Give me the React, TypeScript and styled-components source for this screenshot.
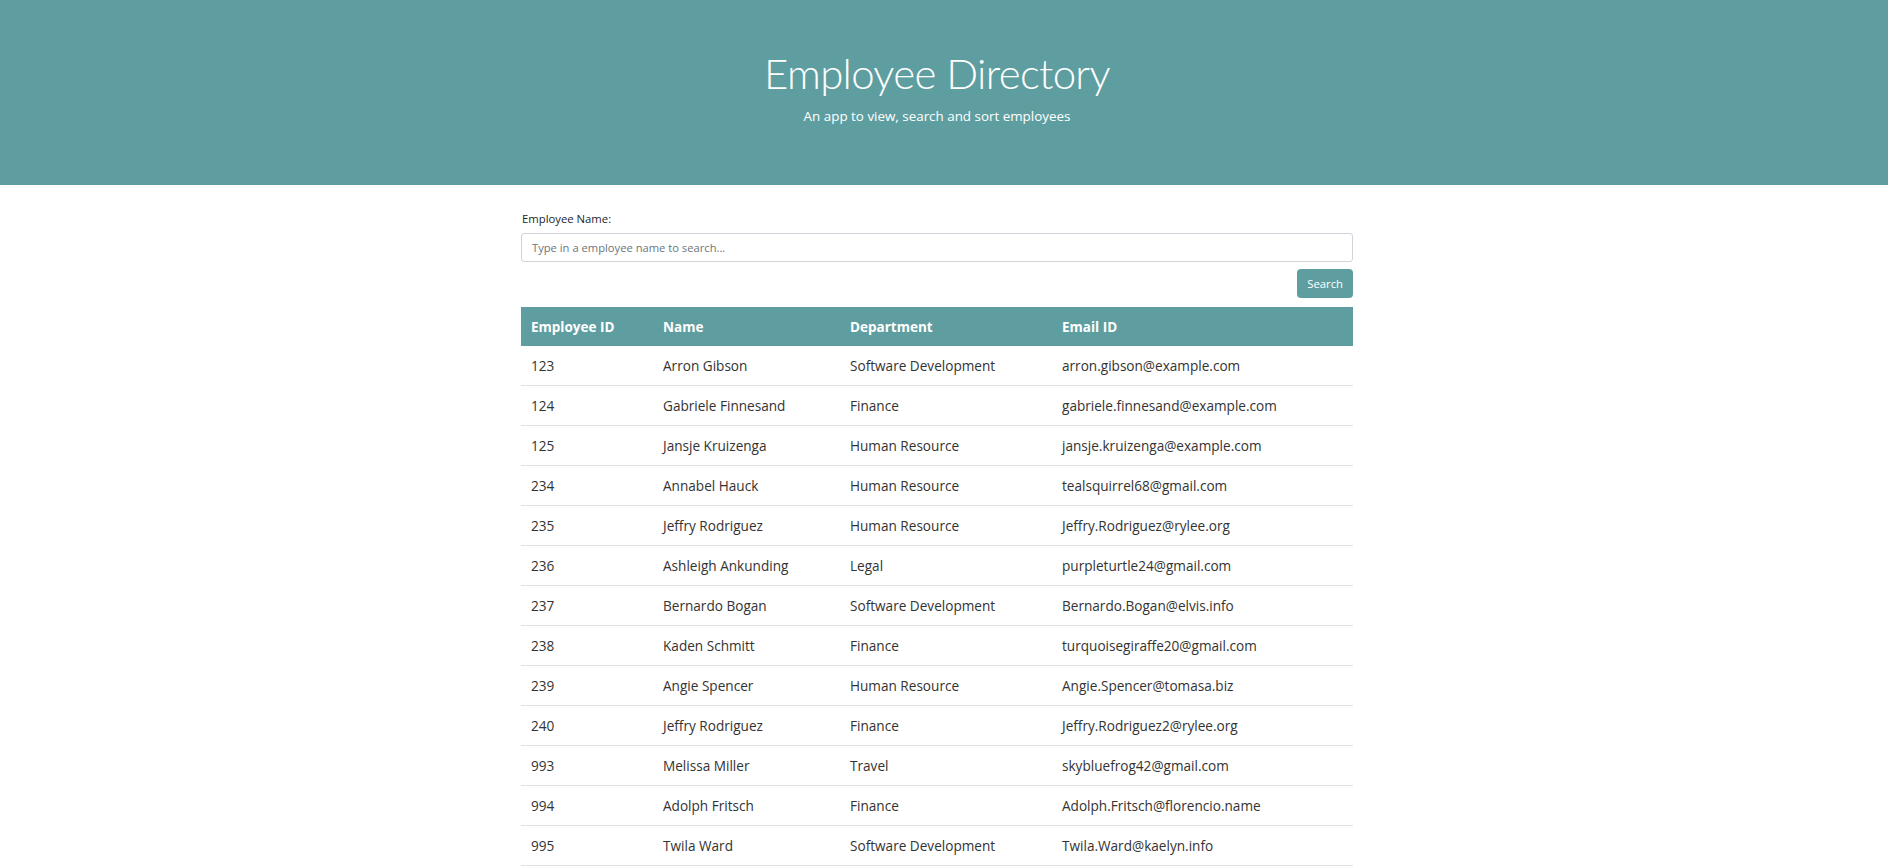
import React from "react";
import styled, { createGlobalStyle } from "styled-components";

const GlobalStyle = createGlobalStyle`
  html::-webkit-scrollbar {
    width: 4px;
    background: #f0f0f0;
  }
  html::-webkit-scrollbar-thumb {
    background: #c8c8c8;
  }
  body {
    margin: 0;
    font-family: "Open Sans", "Noto Sans", sans-serif;
    color: #212529;
    background: #fff;
  }
`

const teal = "#5f9ea0"

const Header = styled.header`
  height: 185px;
  background: ${teal};
  color: #fff;
  display: flex;
  flex-direction: column;
  align-items: center;
  padding: 47px 14px 0 0;
  box-sizing: border-box;
`

const Title = styled.h1`
  margin: 0;
  font-family: Lato, "Open Sans", sans-serif;
  font-weight: 300;
  font-size: 42px;
  letter-spacing: -0.7px;
  line-height: 52px;
`

const Subtitle = styled.p`
  margin: 7px 0 0;
  font-size: 13.4px;
  font-weight: 400;
  line-height: 20px;
`

const Main = styled.main`
  width: 832px;
  margin-left: calc(50% - 423px);
  padding-top: 27px;
`

const Label = styled.label`
  display: block;
  font-size: 11.3px;
  line-height: 14px;
  margin-bottom: 7px;
  padding-left: 1px;
`

const Input = styled.input`
  display: block;
  width: 100%;
  box-sizing: border-box;
  height: 29px;
  padding: 0 10px;
  border: 1px solid #ced4da;
  border-radius: 3px;
  font-family: inherit;
  font-size: 11.2px;
  color: #495057;

  &::placeholder {
    color: #6c757d;
  }
`

const Actions = styled.div`
  display: flex;
  justify-content: flex-end;
  padding: 7px 0 9px;
`

const Button = styled.button`
  height: 29px;
  padding: 0 10px;
  border: none;
  border-radius: 4px;
  background: ${teal};
  color: #fff;
  font-family: inherit;
  font-size: 11.3px;
  cursor: pointer;
`

const Table = styled.table`
  width: 100%;
  border-collapse: collapse;
  font-size: 13.6px;
`

const HeadCell = styled.th<{ w: number }>`
  width: ${({ w }) => w}px;
  background: ${teal};
  color: #fff;
  text-align: left;
  font-weight: 700;
  font-size: 13.5px;
  height: 39px;
  padding: 0 10px;
  box-sizing: border-box;
`

const Row = styled.tr`
  border-bottom: 1px solid #dee2e6;
`

const Cell = styled.td`
  height: 39px;
  padding: 0 10px;
  color: #333;
`

const columns = [
  { label: "Employee ID", w: 132 },
  { label: "Name", w: 187 },
  { label: "Department", w: 212 },
  { label: "Email ID", w: 301 },
]

const employees = [
  [123, "Arron Gibson", "Software Development", "arron.gibson@example.com"],
  [124, "Gabriele Finnesand", "Finance", "gabriele.finnesand@example.com"],
  [125, "Jansje Kruizenga", "Human Resource", "jansje.kruizenga@example.com"],
  [234, "Annabel Hauck", "Human Resource", "tealsquirrel68@gmail.com"],
  [235, "Jeffry Rodriguez", "Human Resource", "Jeffry.Rodriguez@rylee.org"],
  [236, "Ashleigh Ankunding", "Legal", "purpleturtle24@gmail.com"],
  [237, "Bernardo Bogan", "Software Development", "Bernardo.Bogan@elvis.info"],
  [238, "Kaden Schmitt", "Finance", "turquoisegiraffe20@gmail.com"],
  [239, "Angie Spencer", "Human Resource", "Angie.Spencer@tomasa.biz"],
  [240, "Jeffry Rodriguez", "Finance", "Jeffry.Rodriguez2@rylee.org"],
  [993, "Melissa Miller", "Travel", "skybluefrog42@gmail.com"],
  [994, "Adolph Fritsch", "Finance", "Adolph.Fritsch@florencio.name"],
  [995, "Twila Ward", "Software Development", "Twila.Ward@kaelyn.info"],
]

export default function App() {
  const [query, setQuery] = React.useState("")

  return (
    <>
      <GlobalStyle />
      <Header>
        <Title>Employee Directory</Title>
        <Subtitle>An app to view, search and sort employees</Subtitle>
      </Header>
      <Main>
        <Label htmlFor="search">Employee Name:</Label>
        <Input
          id="search"
          value={query}
          onChange={(e) => setQuery(e.target.value)}
          placeholder="Type in a employee name to search..."
        />
        <Actions>
          <Button>Search</Button>
        </Actions>
        <Table>
          <thead>
            <tr>
              {columns.map((c) => (
                <HeadCell key={c.label} w={c.w}>{c.label}</HeadCell>
              ))}
            </tr>
          </thead>
          <tbody>
            {employees.map((e) => (
              <Row key={e[0]}>
                {e.map((v, i) => (
                  <Cell key={i}>{v}</Cell>
                ))}
              </Row>
            ))}
          </tbody>
        </Table>
      </Main>
    </>
  )
}
